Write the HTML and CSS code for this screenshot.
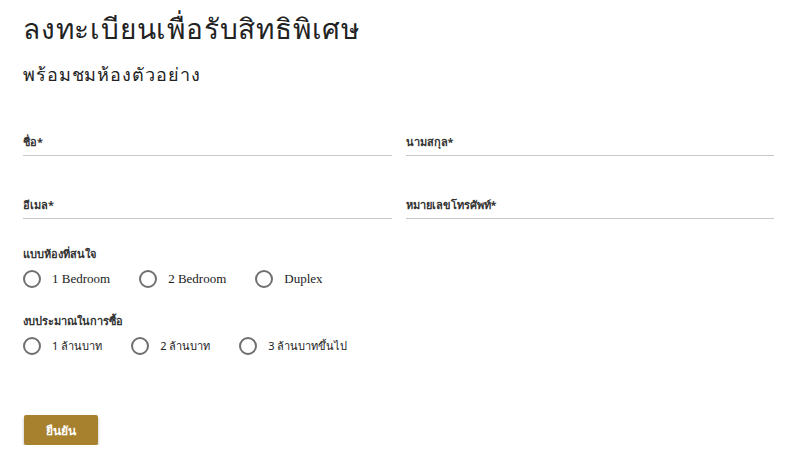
FILE: index.html
```html
<!DOCTYPE html>
<html lang="th">
<head>
    <meta charset="UTF-8">
    <meta name="viewport" content="width=device-width, initial-scale=1.0">
    <title>ลงทะเบียน</title>
    <link rel="stylesheet" href="styles.css">
</head>
<body>
    <div class="container">
        <h1>ลงทะเบียนเพื่อรับสิทธิพิเศษ</h1>
        <h2>พร้อมชมห้องตัวอย่าง</h2>

        <form class="form">
            <div class="row">
                <div class="field">
                    <label>ชื่อ*</label>
                </div>
                <div class="field">
                    <label>นามสกุล*</label>
                </div>
            </div>
            <div class="row">
                <div class="field">
                    <label>อีเมล*</label>
                </div>
                <div class="field">
                    <label>หมายเลขโทรศัพท์*</label>
                </div>
            </div>

            <div class="group">
                <div class="group-title">แบบห้องที่สนใจ</div>
                <div class="options">
                    <label class="option"><span class="radio"></span>1 Bedroom</label>
                    <label class="option"><span class="radio"></span>2 Bedroom</label>
                    <label class="option"><span class="radio"></span>Duplex</label>
                </div>
            </div>

            <div class="group">
                <div class="group-title">งบประมาณในการซื้อ</div>
                <div class="options">
                    <label class="option option-th"><span class="radio"></span>1 ล้านบาท</label>
                    <label class="option option-th"><span class="radio"></span>2 ล้านบาท</label>
                    <label class="option option-th"><span class="radio"></span>3 ล้านบาทขึ้นไป</label>
                </div>
            </div>

            <button type="button" class="submit">ยืนยัน</button>
        </form>
    </div>
</body>
</html>
```

FILE: styles.css
```css
body {
    margin: 0;
    padding: 0;
    background: #fff;
    color: #222;
    font-family: 'Noto Sans', sans-serif;
}

.container {
    padding: 7px 26px 0 23px;
}

h1 {
    font-size: 28px;
    font-weight: normal;
    margin: 0;
    color: #222;
    letter-spacing: 0.8px;
}

h2 {
    font-size: 18px;
    font-weight: normal;
    margin: 9px 0 0;
    color: #222;
    letter-spacing: 0.9px;
}

.form {
    margin-top: 40px;
}

.row {
    display: flex;
    gap: 14px;
    margin-bottom: 36px;
}

.field {
    flex: 1;
    border-bottom: 1px solid #c8c8c8;
    padding-bottom: 4px;
}

.field label {
    font-size: 11px;
    font-weight: bold;
    color: #333;
}

.group {
    margin-top: -10px;
    margin-bottom: 34px;
}

.group-title {
    font-size: 11px;
    font-weight: bold;
    color: #333;
    margin-bottom: 7px;
}

.options {
    display: flex;
    gap: 29px;
}

.option {
    display: flex;
    align-items: center;
    gap: 11px;
    font-family: 'Liberation Serif', serif;
    font-size: 13px;
    color: #222;
}

/* тайский текст в вариантах бюджета */
.option-th {
    font-family: 'Noto Sans', sans-serif;
    font-size: 11px;
    min-height: 18px;
}

.radio {
    width: 14px;
    height: 14px;
    border: 2px solid #707070;
    border-radius: 50%;
}

.submit {
    margin: 26px 0 0 1px;
    width: 74px;
    height: 30px;
    background-color: #a8812f;
    color: #fff;
    font-family: 'Noto Sans', sans-serif;
    font-size: 12px;
    font-weight: bold;
    border: none;
    border-radius: 2px;
    box-shadow: 0 2px 3px rgba(0, 0, 0, 0.3);
}
```
